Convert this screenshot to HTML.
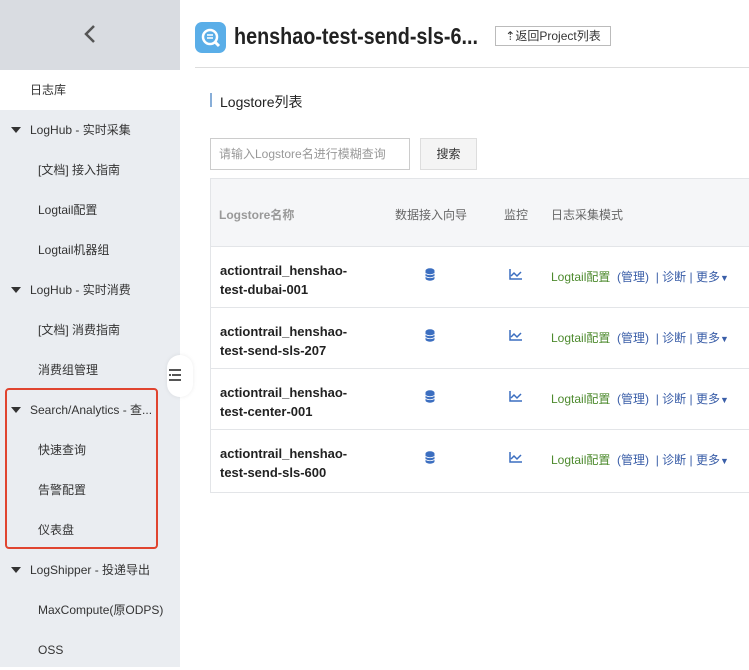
<!DOCTYPE html>
<html><head><meta charset="utf-8"><style>
body{margin:0;width:749px;height:667px;overflow:hidden;background:#fff;font-family:"Liberation Sans","Noto Sans CJK SC",sans-serif;position:relative}
.sb{position:absolute;left:0;top:0;width:180px;height:667px;background:#eaedf1}
.top{height:70px;background:#d9dce1;position:relative}
.it{position:absolute;left:0;width:180px;height:40px;line-height:40px;font-size:12px;color:#333}
.tri{position:absolute;left:11px;top:17px;width:0;height:0;border-left:5px solid transparent;border-right:5px solid transparent;border-top:6px solid #333}
.a{position:absolute;font-size:12px}
.row{position:absolute;left:210px;width:539px;height:61px;border-top:1px solid #e3e5e8}
.nm{position:absolute;left:10px;top:14px;font-weight:bold;font-size:13px;color:#222;line-height:19px}
</style></head><body>
<div class="sb">
<div class="top"><svg style="position:absolute;left:83px;top:24px" width="14" height="20"><path d="M11 2 L3 10 L11 18" stroke="#555" stroke-width="2.5" fill="none"/></svg></div>
<div class="it" style="top:70px;background:#fff;padding-left:30px;width:150px">日志库</div>
<div class="it" style="top:110px;padding-left:30px;width:150px"><span class="tri"></span>LogHub - 实时采集</div>
<div class="it" style="top:150px;padding-left:38px;width:142px">[文档] 接入指南</div>
<div class="it" style="top:190px;padding-left:38px;width:142px">Logtail配置</div>
<div class="it" style="top:230px;padding-left:38px;width:142px">Logtail机器组</div>
<div class="it" style="top:270px;padding-left:30px;width:150px"><span class="tri"></span>LogHub - 实时消费</div>
<div class="it" style="top:310px;padding-left:38px;width:142px">[文档] 消费指南</div>
<div class="it" style="top:350px;padding-left:38px;width:142px">消费组管理</div>
<div class="it" style="top:390px;padding-left:30px;width:150px"><span class="tri"></span>Search/Analytics - 查...</div>
<div class="it" style="top:430px;padding-left:38px;width:142px">快速查询</div>
<div class="it" style="top:470px;padding-left:38px;width:142px">告警配置</div>
<div class="it" style="top:510px;padding-left:38px;width:142px">仪表盘</div>
<div class="it" style="top:550px;padding-left:30px;width:150px"><span class="tri"></span>LogShipper - 投递导出</div>
<div class="it" style="top:590px;padding-left:38px;width:142px">MaxCompute(原ODPS)</div>
<div class="it" style="top:630px;padding-left:38px;width:142px">OSS</div>
</div>
<div style="position:absolute;left:5px;top:388px;width:149px;height:157px;border:2px solid #e0442f;border-radius:4px"></div>
<div style="position:absolute;left:167px;top:355px;width:26px;height:42px;border-radius:13px;background:#fff;box-shadow:0 0 4px rgba(0,0,0,.08)"></div>
<svg style="position:absolute;left:169px;top:369px" width="12" height="12"><path d="M0 1H12M3 6H12M0 11H12" stroke="#555" stroke-width="2"/><path d="M0 6H2" stroke="#555" stroke-width="2"/></svg>
<div style="position:absolute;left:195px;top:22px;width:31px;height:31px;background:#5aaee8;border-radius:7px"></div>
<svg style="position:absolute;left:195px;top:22px" width="31" height="31"><circle cx="15" cy="15" r="7" stroke="#fff" stroke-width="2.5" fill="none"/><path d="M12 13h6M12 16h6" stroke="#fff" stroke-width="1.5"/><path d="M20 20l4 4" stroke="#fff" stroke-width="3"/></svg>
<div class="a" style="left:234px;top:23px;font-size:23px;font-weight:bold;color:#222;transform:scaleX(0.86);transform-origin:0 0;white-space:nowrap">henshao-test-send-sls-6...</div>
<div class="a" style="left:495px;top:26px;width:114px;height:18px;border:1px solid #bbb;font-size:12px;color:#333;text-align:center;line-height:18px">⇡返回Project列表</div>
<div style="position:absolute;left:195px;top:67px;width:554px;height:1px;background:#ddd"></div>
<div style="position:absolute;left:210px;top:93px;width:2px;height:14px;background:#88aed8"></div>
<div class="a" style="left:220px;top:92px;font-size:14px;color:#222">Logstore列表</div>
<div class="a" style="left:210px;top:138px;color:#999;line-height:30px;padding-left:8px;box-sizing:border-box;width:200px;height:32px;border:1px solid #ccc">请输入Logstore名进行模糊查询</div>
<div class="a" style="left:420px;top:138px;width:57px;height:32px;border:1px solid #ddd;background:#f4f4f4;box-sizing:border-box;text-align:center;line-height:30px;color:#333">搜索</div>
<div style="position:absolute;left:210px;top:178px;width:539px;height:313px;border-left:1px solid #e3e5e8;border-top:1px solid #e3e5e8;border-bottom:1px solid #e3e5e8"></div>
<div style="position:absolute;left:211px;top:179px;width:538px;height:67px;background:#f5f6f8"></div>
<div class="a" style="left:219px;top:206px;color:#999;font-weight:bold">Logstore名称</div>
<div class="a" style="left:395px;top:206px;color:#666">数据接入向导</div>
<div class="a" style="left:504px;top:206px;color:#666">监控</div>
<div class="a" style="left:551px;top:206px;color:#666">日志采集模式</div>
<div class="row" style="top:246px"><div class="nm">actiontrail_henshao-<br>test-dubai-001</div></div>
<div class="row" style="top:307px"><div class="nm">actiontrail_henshao-<br>test-send-sls-207</div></div>
<div class="row" style="top:368px"><div class="nm">actiontrail_henshao-<br>test-center-001</div></div>
<div class="row" style="top:429px"><div class="nm">actiontrail_henshao-<br>test-send-sls-600</div></div>
<script>
[268,329,390,451].forEach(function(y){
document.body.insertAdjacentHTML('beforeend',
'<svg style="position:absolute;left:425px;top:'+y+'px" width="10" height="13"><ellipse cx="5" cy="2.5" rx="4.5" ry="2.2" fill="#3b6ec0"/><rect x="0.5" y="2.5" width="9" height="8" fill="#3b6ec0"/><ellipse cx="5" cy="10.5" rx="4.5" ry="2.2" fill="#3b6ec0"/><path d="M0.5 5.5Q5 8 9.5 5.5M0.5 8.5Q5 11 9.5 8.5" stroke="#fff" stroke-width="0.8" fill="none"/></svg>'+
'<svg style="position:absolute;left:509px;top:'+(y+1)+'px" width="14" height="11"><path d="M1 0V10H13" stroke="#3b6ec0" stroke-width="1.5" fill="none"/><path d="M2 7L5 4L8 7L12 3" stroke="#3b6ec0" stroke-width="1.5" fill="none"/></svg>'+
'<div class="a" style="left:551px;top:'+(y)+'px;color:#3a5ea8"><span style="color:#4d8a2e">Logtail配置</span>&nbsp; (管理) &nbsp;| 诊断 | 更多<span style="font-size:9px">▼</span></div>');
});
</script>
</body></html>
